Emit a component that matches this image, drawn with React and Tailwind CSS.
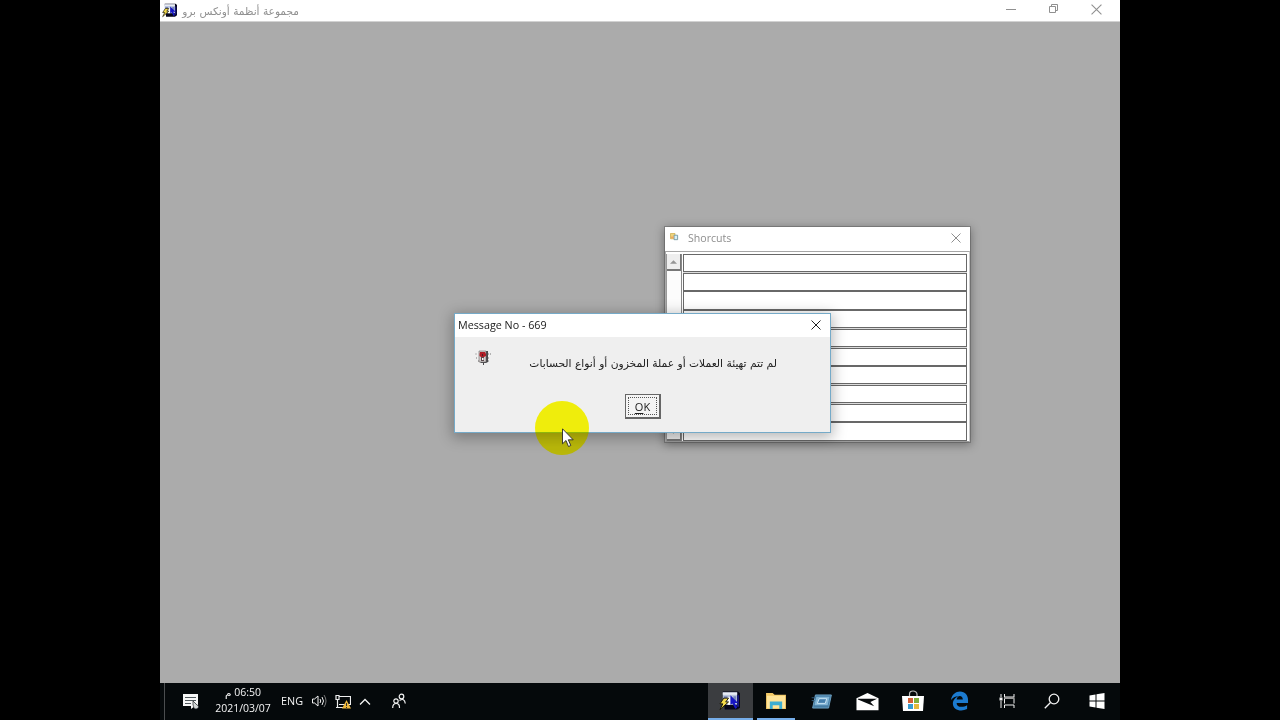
import React from 'react';

const rows = Array.from({ length: 10 }, (_, i) => i);

const AppIcon = ({ className }) => (
  <svg viewBox="0 0 22 20" className={className}>
    <path d="M4 0h16l2 2v15l-3 2H6z" fill="#05051a" />
    <path d="M4 1h15v13H4z" fill="#b9c4dc" />
    <path d="M4 1h15v2.500H4z" fill="#e9edf5" />
    <path d="M5 5h4v3H5zM15 5h3v5h-3z" fill="#7887b8" />
    <path d="M19 4h2v12h-3v-2h1z" fill="#17177c" />
    <path d="M9 6h3v8H9z" fill="#ffffff" />
    <path d="M12 4v10l2-1.500L17 18l2-1-2.500-5H20z" fill="#1616c4" />
    <path d="M5 7h5L7 11h3L1 19l3-6H1z" fill="#f5dc4c" stroke="#1a1606" strokeWidth="1" />
  </svg>
);

const CloseIcon = ({ className }) => (
  <svg viewBox="0 0 10 10" className={className} fill="none" stroke="currentColor" strokeWidth="1">
    <path d="M0.500 0.500l9 9M9.500 0.500l-9 9" />
  </svg>
);

const TitleBar = () => (
  <header className="flex h-[22px] shrink-0 items-center border-b border-[#d2d2d2] bg-white text-[#909090]">
    <AppIcon className="mb-[1px] ml-[2px] h-[15px] w-[15px]" />
    <span dir="rtl" className="ml-[5px] w-[117px] whitespace-nowrap font-['DejaVu_Sans',sans-serif] text-[10.600px] leading-[20px]">
      مجموعة أنظمة أونكس برو
    </span>
    <div className="mb-[3px] ml-auto flex items-center">
      <svg viewBox="0 0 10 10" className="mr-[32px] h-[10px] w-[10px]" stroke="currentColor">
        <path d="M0 5.500h10" />
      </svg>
      <svg viewBox="0 0 10 10" className="mr-[33px] h-[10px] w-[10px]" fill="none" stroke="currentColor">
        <path d="M1.500 2.500h6v6h-6zM3.500 2.500v-2h6v6h-2" />
      </svg>
      <CloseIcon className="mr-[18px] h-[11px] w-[11px]" />
    </div>
  </header>
);

const ShortcutsWindow = () => (
  <section className="absolute left-[505px] top-[227px] flex h-[215px] w-[305px] flex-col bg-white shadow-[0_2px_9px_1px_rgba(0,0,0,0.35),0_0_0_1px_rgba(90,90,90,0.4)]">
    <div className="flex h-[24px] shrink-0 items-center text-[#8e8e8e]">
      <svg viewBox="0 0 10 9" className="mb-[5px] ml-[5px] h-[8px] w-[9px]">
        <path d="M0.500 0.500h5v6h-5z" fill="#eed47d" stroke="#d2b65d" />
        <path d="M4.500 2.500h4v5h-4z" fill="#d9f0f5" stroke="#7095a0" />
        <path d="M1 4h3v2H1z" fill="#efa761" />
      </svg>
      <span className="ml-[9px] mb-[1px] font-['Open_Sans',sans-serif] text-[10.600px]">Shorcuts</span>
      <CloseIcon className="mb-[2px] ml-auto mr-[9px] h-[10px] w-[10px]" />
    </div>
    <div className="flex min-h-0 flex-1 border border-t-[#a6a6a6] border-b-[#9b9b9b] border-l-[#aaaaaa] border-r-[#cccccc] pt-[2px] pr-[2px]">
      <div className="mr-px flex w-[16px] flex-col justify-between border-x border-l-[#999999] border-r-[#888888] bg-[#fcfcfc]">
        <div className="flex h-[17px] items-center justify-center border-r border-b-2 border-[#777777] bg-[#eeeeee]">
          <svg viewBox="0 0 8 4" className="h-[4px] w-[7px]"><path d="M0 4l4-4 4 4z" fill="#959595" /></svg>
        </div>
        <div className="flex h-[17px] items-center justify-center border-r border-b-2 border-[#777777] bg-[#eeeeee]">
          <svg viewBox="0 0 8 4" className="h-[4px] w-[7px]"><path d="M0 0h8L4 4z" fill="#959595" /></svg>
        </div>
      </div>
      <div className="grid min-w-0 flex-1 grid-rows-10 bg-[#dddddd]">
        {rows.map((row) => (
          <div key={row} className="mb-[0.500px] border border-[#686868] bg-white" />
        ))}
      </div>
    </div>
  </section>
);

const MessageDialog = () => (
  <section className="absolute left-[294px] top-[313px] flex h-[119.500px] w-[377px] flex-col border border-[#75aac8] bg-[#efefef] text-[#202020] shadow-[0_3px_13px_2px_rgba(0,0,0,0.28)]">
    <div className="flex h-[23px] shrink-0 items-center bg-white">
      <span className="ml-[3px] whitespace-nowrap font-['Open_Sans',sans-serif] text-[10.750px]">Message No - 669</span>
      <CloseIcon className="mb-[1px] ml-auto mr-[9px] h-[10px] w-[10px]" />
    </div>
    <div className="flex h-[57px] items-start">
      <svg viewBox="0 0 16 16" className="ml-[20px] mt-[13px] h-[16px] w-[16px]">
        <path d="M0.500 4h2M1 8h2M3 11h1M13 4h3M13 8h2M13 11h2" stroke="#777777" strokeDasharray="1 1" />
        <path d="M5 1h8v11l-2 1H9v2H8v-2H6l-1-1z" fill="#48484b" />
        <path d="M4 1h7v11H4z" fill="#d4cfcf" stroke="#696767" strokeWidth="0.600" />
        <path d="M5 2h5l1 2v2L9 7H6L4.500 6V4z" fill="#b01c26" />
        <path d="M7 4h1v2H7z" fill="#4b2024" />
        <path d="M6 7h3v4H6z" fill="#5b4a4c" />
        <path d="M7 8h1.500v2H7z" fill="#ffffff" />
      </svg>
      <span dir="rtl" className="ml-[39px] mt-[17px] w-[247px] whitespace-nowrap font-['DejaVu_Sans',sans-serif] text-[10.700px] leading-[20px]">
        لم تتم تهيئة العملات أو عملة المخزون أو أنواع الحسابات
      </span>
    </div>
    <button className="ml-[170px] h-[25px] w-[36px] shrink-0 border border-r-2 border-b-2 border-[#666666] bg-[#f4f4f4] p-[2px]">
      <span className="flex h-full items-center justify-center border border-dotted border-[#555555] font-['Open_Sans',sans-serif] text-[11px] leading-none">
        <span className="underline underline-offset-2">O</span>K
      </span>
    </button>
  </section>
);

const Pointer = () => (
  <>
    <div className="absolute left-[375px] top-[401px] h-[54px] w-[54px] rounded-full bg-[#ffff10] mix-blend-multiply" />
    <div className="absolute left-[375px] top-[401px] h-[54px] w-[54px] rounded-full bg-[#f0e800]/20" />
    <svg viewBox="0 0 12 20" className="absolute left-[402px] top-[428px] h-[20px] w-[12px]">
      <path d="M0.500 0.800v15l3.500-3.300 2.500 6 2.300-1-2.500-5.700h4.900z" fill="#ffffff" stroke="#292929" strokeWidth="0.900" />
    </svg>
  </>
);

const SystemTray = () => (
  <div className="flex h-full items-center">
    <div className="ml-[4px] h-full w-px bg-[#4b4e50]" />
    <svg viewBox="0 0 17 17" className="ml-[18px] h-[17px] w-[17px]">
      <path d="M0 1h15v12h-3l-4 3v-3H0z" fill="#f7f7f7" />
      <path d="M2 4.500h11M2 7.500h11M2 10.500h6" stroke="#50585c" />
      <path d="M10 8l4 4c3 1 1 4-1 4-3 0-2-3-3-4z" fill="#d3d7d7" stroke="#1b2024" strokeWidth="0.700" />
    </svg>
    <div className="mb-[3px] ml-[13px] flex w-[60px] flex-col items-center whitespace-nowrap font-['Open_Sans','DejaVu_Sans',sans-serif] text-[10.500px] leading-[16px]">
      <span dir="rtl">06:50 م</span>
      <span>2021/03/07</span>
    </div>
    <span className="ml-[8px] w-[23px] font-['Open_Sans',sans-serif] text-[10.800px]">ENG</span>
    <svg viewBox="0 0 15 14" className="mb-[1px] ml-[8px] h-[14px] w-[15px]" fill="none" stroke="currentColor">
      <path d="M0.500 5h2L6 2v10L2.500 9h-2zM8 5q1.500 2 0 4M10 3q3 4 0 8" />
      <path d="M12 1q4 6 0 12" stroke="#777777" />
    </svg>
    <svg viewBox="0 0 16 16" className="ml-[8px] h-[16px] w-[16px]" fill="none">
      <path d="M4 2.500h11.500v8H4M1 1.500h3v4H1zM2.500 5.500v8M1 13.500h7" stroke="#eeeeee" strokeWidth="1.200" />
      <path d="M11.500 6l4.500 8.500H7z" fill="#edb83d" />
      <path d="M11.500 9v3M11.500 13v1" stroke="#333333" />
    </svg>
    <svg viewBox="0 0 12 8" className="ml-[8px] h-[8px] w-[12px]" fill="none" stroke="currentColor" strokeWidth="1.300">
      <path d="M1 6.500l5-5 5 5" />
    </svg>
    <svg viewBox="0 0 14 16" className="mb-[1px] ml-[21px] h-[16px] w-[14px]" fill="none" stroke="currentColor" strokeWidth="1.200">
      <circle cx="4" cy="8" r="2.200" />
      <path d="M0.700 15q0-4.500 3.500-4.500T7.500 15" />
      <circle cx="9.500" cy="3.500" r="2.300" />
      <path d="M7.500 7.500q5-3 5.800 3" />
    </svg>
  </div>
);

const TaskButton = ({ className, children }) => (
  <button className={`flex h-full w-[46px] items-center justify-center ${className || ''}`}>
    {children}
  </button>
);

const Taskbar = () => (
  <footer className="flex h-[37px] shrink-0 items-center justify-between bg-[#05090b] text-[#f3f3f3]">
    <SystemTray />
    <nav className="flex h-full items-center">
      <button className="flex h-full w-[45px] items-center justify-center border-b-[2px] border-[#76aeea] bg-[#3b3d40]">
        <AppIcon className="mr-[2px] mt-[1px] h-[20px] w-[21px]" />
      </button>
      <button className="ml-[4px] mr-[4px] flex h-full w-[38px] items-center justify-center border-b-[2px] border-[#76aeea]">
        <svg viewBox="0 0 21 19" className="mr-[1px] mt-[1px] h-[18px] w-[20px]">
          <path d="M0 1h7l2 2h12v15H0z" fill="#f3c967" />
          <path d="M1 4h19v13H1z" fill="#ffe499" />
          <path d="M4 10h13v8h-3v-4H7v4H4z" fill="#3eaed1" />
        </svg>
      </button>
      <TaskButton>
        <svg viewBox="0 0 22 16" className="mb-[1px] h-[15px] w-[22px]">
          <path d="M4 1h17l-3 14H1z" fill="#467da4" stroke="#6fa2c4" />
          <path d="M5 3h14l-2 9H3z" fill="#83b5d5" />
          <path d="M8 5h8l-1.500 5H6z" fill="#447eac" stroke="#d2eaf6" />
          <path d="M0 4h4M0 7h3" stroke="#345c7c" />
        </svg>
      </TaskButton>
      <TaskButton>
        <svg viewBox="0 0 24 19" className="mb-[1px] mr-[1px] h-[19px] w-[23px]">
          <path d="M0.500 6L12 0.500 23.500 6v12.500H0.500z" fill="#ffffff" />
          <path d="M2 6.500h20l-7 3.500 4 4.500L2 7.500z" fill="#080b0d" />
        </svg>
      </TaskButton>
      <TaskButton className="-ml-[1px]">
        <svg viewBox="0 0 22 22" className="mb-[1px] h-[22px] w-[22px]">
          <path d="M7.500 6V4q0-3 3.500-3t4 3v2" fill="none" stroke="#bbbbbb" strokeWidth="1.200" />
          <path d="M0 6h22l-1 15H1z" fill="#ffffff" />
          <path d="M6 8h5v5H6z" fill="#d35f36" /><path d="M12 8h5v5h-5z" fill="#7fae3b" />
          <path d="M6 14h5v5H6z" fill="#379bcf" /><path d="M12 14h5v5h-5z" fill="#e5b83c" />
        </svg>
      </TaskButton>
      <TaskButton className="ml-[1px]">
        <svg viewBox="0 0 20 20" className="mb-[1px] mr-[1px] h-[20px] w-[19px]">
          <path d="M1 9C2 3 6 0 10.500 0 16 0 19 4 19 9v3H7c0 5 7 5 11 2.500v4C11 22 3 19 3 12.500 3 9 6 6 9 5 5 5 3 6.500 1 9zm6-0.500h6.500C13.500 3.500 7.500 3.500 7 8.500z" fill="#1c7bd0" fillRule="evenodd" />
        </svg>
      </TaskButton>
      <TaskButton className="ml-[1px]">
        <svg viewBox="0 0 16 16" className="mb-[1px] h-[16px] w-[16px]" fill="none" stroke="currentColor">
          <path d="M5.500 1v3H15V1M5.500 15v-3H15v3M5.500 5.500v5M15 5.500v5M2 1v3M2 8v7" />
          <path d="M5 4h10.500v2H5z" fill="#999999" stroke="none" />
          <path d="M0.500 4.500h3v3h-3z" fill="currentColor" stroke="none" />
        </svg>
      </TaskButton>
      <TaskButton className="-ml-[1px]">
        <svg viewBox="0 0 16 16" className="mb-[1px] h-[16px] w-[16px]" fill="none" stroke="currentColor" strokeWidth="1.300">
          <circle cx="10" cy="6" r="4.800" /><path d="M6.500 9.500L0.800 15.200" />
        </svg>
      </TaskButton>
      <TaskButton className="-ml-[1px]">
        <svg viewBox="0 0 16 16" className="mb-[1px] h-[16px] w-[16px]" fill="#ffffff">
          <path d="M0.500 2.500l6-1v6h-6zM7.500 1.300l8-1.300v7.500h-8zM0.500 8.500h6v6l-6-1zM7.500 8.500h8V16l-8-1.300z" />
        </svg>
      </TaskButton>
    </nav>
  </footer>
);

const App = () => (
  <div className="flex h-screen justify-center overflow-hidden bg-black">
    <div className="relative isolate flex w-[960px] flex-col bg-[#ababab]">
      <TitleBar />
      <main className="flex-1">
        <ShortcutsWindow />
        <MessageDialog />
        <Pointer />
      </main>
      <Taskbar />
    </div>
  </div>
);

export default App;
